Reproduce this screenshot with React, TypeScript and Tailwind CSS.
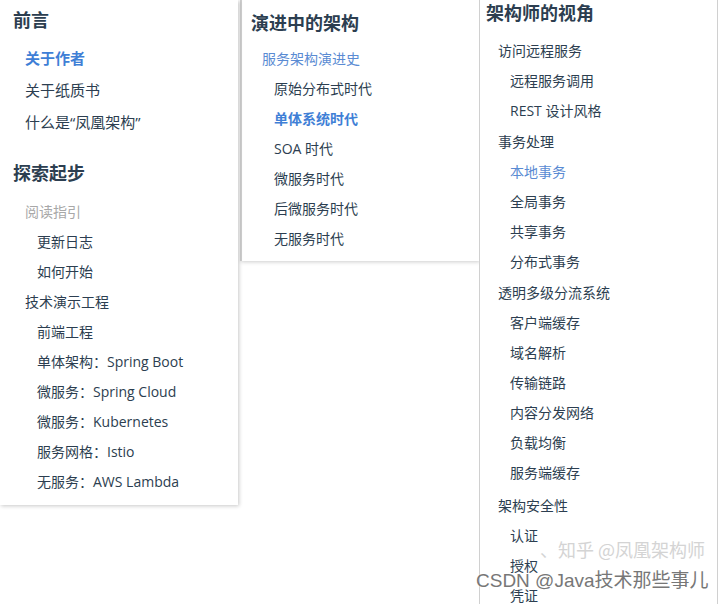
import React from "react";

type Item = { t: string; lv: 0 | 1 | 2; kind?: "active" | "link" | "muted"; mt?: string; size?: string };

const font = { fontFamily: '"Open Sans", "Noto Sans CJK SC", sans-serif' };

function Row({ it, pads }: { it: Item; pads: string[] }) {
  if (it.lv === 0) {
    return (
      <div className={`h-[30px] flex items-center font-bold text-[18px] text-[#2c3e50] ${pads[0]} ${it.mt ?? ""}`}>
        {it.t}
      </div>
    );
  }
  let color = "text-[#2c3e50]";
  let weight = "font-normal";
  if (it.kind === "active") {
    color = "text-[#3f7fd6]";
    weight = "font-bold";
  } else if (it.kind === "link") {
    color = "text-[#5a8bd3]";
  } else if (it.kind === "muted") {
    color = "text-[#a8a8a8]";
  }
  const size = it.size ?? "text-[14px]";
  return (
    <div className={`h-[30px] flex items-center whitespace-nowrap ${size} ${color} ${weight} ${it.lv === 1 ? pads[1] : pads[2]} ${it.mt ?? ""}`}>
      {it.t}
    </div>
  );
}

const left: Item[] = [
  { t: "前言", lv: 0, mt: "mt-[5px]" },
  { t: "关于作者", lv: 1, kind: "active", mt: "mt-[7px]", size: "text-[15px] h-[32px]" },
  { t: "关于纸质书", lv: 1, size: "text-[15px] h-[32px]" },
  { t: "什么是“凤凰架构”", lv: 1, size: "text-[15px] h-[32px]" },
  { t: "探索起步", lv: 0, mt: "mt-[20px]" },
  { t: "阅读指引", lv: 1, kind: "muted", mt: "mt-[8px]" },
  { t: "更新日志", lv: 2 },
  { t: "如何开始", lv: 2 },
  { t: "技术演示工程", lv: 1 },
  { t: "前端工程", lv: 2 },
  { t: "单体架构：Spring Boot", lv: 2 },
  { t: "微服务：Spring Cloud", lv: 2 },
  { t: "微服务：Kubernetes", lv: 2 },
  { t: "服务网格：Istio", lv: 2 },
  { t: "无服务：AWS Lambda", lv: 2 },
];

const mid: Item[] = [
  { t: "演进中的架构", lv: 0, mt: "mt-[8px]" },
  { t: "服务架构演进史", lv: 1, kind: "link", mt: "mt-[5px]" },
  { t: "原始分布式时代", lv: 2 },
  { t: "单体系统时代", lv: 2, kind: "active" },
  { t: "SOA 时代", lv: 2 },
  { t: "微服务时代", lv: 2 },
  { t: "后微服务时代", lv: 2 },
  { t: "无服务时代", lv: 2 },
];

const right: Item[] = [
  { t: "架构师的视角", lv: 0, mt: "-mt-[2px]" },
  { t: "访问远程服务", lv: 1, mt: "mt-[7px]" },
  { t: "远程服务调用", lv: 2 },
  { t: "REST 设计风格", lv: 2 },
  { t: "事务处理", lv: 1, mt: "mt-[1px]" },
  { t: "本地事务", lv: 2, kind: "link" },
  { t: "全局事务", lv: 2 },
  { t: "共享事务", lv: 2 },
  { t: "分布式事务", lv: 2 },
  { t: "透明多级分流系统", lv: 1, mt: "mt-[1px]" },
  { t: "客户端缓存", lv: 2 },
  { t: "域名解析", lv: 2 },
  { t: "传输链路", lv: 2 },
  { t: "内容分发网络", lv: 2 },
  { t: "负载均衡", lv: 2 },
  { t: "服务端缓存", lv: 2 },
  { t: "架构安全性", lv: 1, mt: "mt-[3px]" },
  { t: "认证", lv: 2 },
  { t: "授权", lv: 2 },
  { t: "凭证", lv: 2 },
];

export default function App() {
  return (
    <div className="relative w-[720px] h-[604px] overflow-hidden bg-white flex items-start" style={font}>
      <div className="w-[238px] pb-[9px] bg-white shadow-[1px_1px_4px_rgba(0,0,0,0.22)] relative z-10">
        {left.map((it, i) => (
          <Row key={i} it={it} pads={["pl-[13px]", "pl-[25px]", "pl-[37px]"]} />
        ))}
      </div>
      <div className="w-[239px] ml-[2px] pb-[8px] bg-white border-l-2 border-[#cfcfcf] shadow-[1px_1px_4px_rgba(0,0,0,0.2)]">
        {mid.map((it, i) => (
          <Row key={i} it={it} pads={["pl-[9px]", "pl-[20px]", "pl-[32px]"]} />
        ))}
      </div>
      <div className="w-[239px] h-[620px] bg-white border-x border-[#d0d0d0] relative z-10">
        {right.map((it, i) => (
          <Row key={i} it={it} pads={["pl-[6px]", "pl-[18px]", "pl-[30px]"]} />
        ))}
      </div>
      <div
        className="absolute left-[540px] top-[536px] z-20 text-[18px] text-[#d4d4d4] whitespace-nowrap"
        style={{ fontFamily: '"Noto Sans CJK SC", sans-serif' }}
      >
        、知乎 @凤凰架构师
      </div>
      <div
        className="absolute left-[476px] top-[567px] z-20 text-[19px] text-[#777] whitespace-nowrap [text-shadow:0_0_2px_#fff]"
        style={{ fontFamily: '"Liberation Sans", "Noto Sans CJK SC", sans-serif' }}
      >
        CSDN @Java技术那些事儿
      </div>
    </div>
  );
}
